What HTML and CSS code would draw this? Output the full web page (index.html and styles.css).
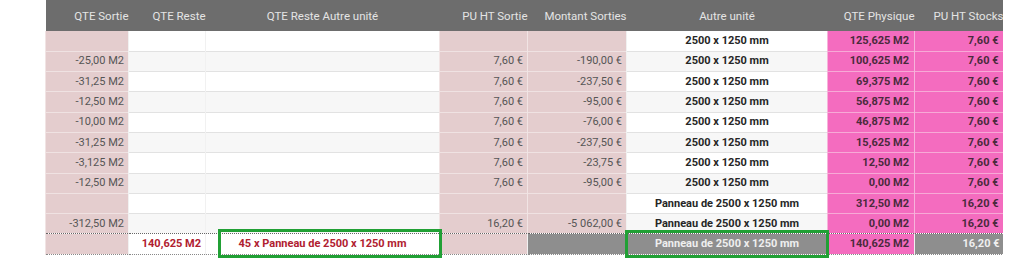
FILE: index.html
```html
<!DOCTYPE html>
<html lang="fr">
<head>
<meta charset="utf-8">
<title>Stocks</title>
<link rel="stylesheet" href="styles.css">
</head>
<body>
<div class="wrap">
  <table class="grid">
    <colgroup>
      <col class="c1"><col class="c2"><col class="c3"><col class="c4"><col class="c5"><col class="c6"><col class="c7"><col class="c8">
    </colgroup>
    <thead>
      <tr>
        <th class="r">QTE Sortie</th>
        <th class="r">QTE Reste</th>
        <th class="c">QTE Reste Autre unité</th>
        <th class="r">PU HT Sortie</th>
        <th class="r">Montant Sorties</th>
        <th class="c">Autre unité</th>
        <th class="r">QTE Physique</th>
        <th class="r last">PU HT Stocks</th>
      </tr>
    </thead>
    <tbody>
      <tr><td class="rose"></td><td></td><td></td><td class="rose"></td><td class="rose"></td><td class="unit">2500 x 1250 mm</td><td class="hot">125,625 M2</td><td class="hot">7,60 €</td></tr>
      <tr class="alt"><td class="rose">-25,00 M2</td><td></td><td></td><td class="rose">7,60 €</td><td class="rose">-190,00 €</td><td class="unit">2500 x 1250 mm</td><td class="hot">100,625 M2</td><td class="hot">7,60 €</td></tr>
      <tr><td class="rose">-31,25 M2</td><td></td><td></td><td class="rose">7,60 €</td><td class="rose">-237,50 €</td><td class="unit">2500 x 1250 mm</td><td class="hot">69,375 M2</td><td class="hot">7,60 €</td></tr>
      <tr class="alt"><td class="rose">-12,50 M2</td><td></td><td></td><td class="rose">7,60 €</td><td class="rose">-95,00 €</td><td class="unit">2500 x 1250 mm</td><td class="hot">56,875 M2</td><td class="hot">7,60 €</td></tr>
      <tr><td class="rose">-10,00 M2</td><td></td><td></td><td class="rose">7,60 €</td><td class="rose">-76,00 €</td><td class="unit">2500 x 1250 mm</td><td class="hot">46,875 M2</td><td class="hot">7,60 €</td></tr>
      <tr class="alt"><td class="rose">-31,25 M2</td><td></td><td></td><td class="rose">7,60 €</td><td class="rose">-237,50 €</td><td class="unit">2500 x 1250 mm</td><td class="hot">15,625 M2</td><td class="hot">7,60 €</td></tr>
      <tr><td class="rose">-3,125 M2</td><td></td><td></td><td class="rose">7,60 €</td><td class="rose">-23,75 €</td><td class="unit">2500 x 1250 mm</td><td class="hot">12,50 M2</td><td class="hot">7,60 €</td></tr>
      <tr class="alt"><td class="rose">-12,50 M2</td><td></td><td></td><td class="rose">7,60 €</td><td class="rose">-95,00 €</td><td class="unit">2500 x 1250 mm</td><td class="hot">0,00 M2</td><td class="hot">7,60 €</td></tr>
      <tr><td class="rose"></td><td></td><td></td><td class="rose"></td><td class="rose"></td><td class="unit">Panneau de 2500 x 1250 mm</td><td class="hot">312,50 M2</td><td class="hot">16,20 €</td></tr>
      <tr class="alt"><td class="rose">-312,50 M2</td><td></td><td></td><td class="rose">16,20 €</td><td class="rose">-5 062,00 €</td><td class="unit">Panneau de 2500 x 1250 mm</td><td class="hot">0,00 M2</td><td class="hot">16,20 €</td></tr>
      <tr class="total">
        <td class="rose"></td>
        <td class="red">140,625 M2</td>
        <td class="red c">45 x Panneau de 2500 x 1250 mm</td>
        <td class="rose"></td>
        <td class="grey"></td>
        <td class="grey c">Panneau de 2500 x 1250 mm</td>
        <td class="hot">140,625 M2</td>
        <td class="grey">16,20 €</td>
      </tr>
    </tbody>
  </table>
  <div class="mark mark-a"></div>
  <div class="mark mark-b"></div>
</div>
</body>
</html>
```
FILE: styles.css
```css
html, body {
  margin: 0;
  padding: 0;
  background: #ffffff;
}

.wrap {
  position: relative;
  padding-left: 45px;
  width: 958px;
  height: 259px;
  overflow: hidden;
}

.grid {
  border-collapse: collapse;
  table-layout: fixed;
  width: 958px;
  font-family: Roboto, "Liberation Sans", sans-serif;
  font-size: 11px;
  color: #555555;
}

.c1 { width: 83px; }
.c2 { width: 77px; }
.c3 { width: 234px; }
.c4 { width: 88px; }
.c5 { width: 99px; }
.c6 { width: 201px; }
.c7 { width: 87px; }
.c8 { width: 89px; }

.grid th {
  height: 31px;
  padding: 0;
  background: #6d6d6d;
  color: #e4e4e4;
  font-size: 11.5px;
  font-weight: 400;
  white-space: nowrap;
  overflow: hidden;
  vertical-align: middle;
}

.grid th.r { text-align: right; }
.grid th.c { text-align: center; }
.grid th.last { text-align: left; padding-left: 19px; }

.grid td {
  height: 20.3px;
  padding: 0 4px;
  box-sizing: border-box;
  border-top: 1px solid #e2e2e2;
  border-left: 1px solid #f1f1f1;
  text-align: right;
  white-space: nowrap;
  overflow: hidden;
  background: #ffffff;
  vertical-align: middle;
  line-height: 14px;
}

.grid tbody tr:first-child td { border-top: 0; }

.grid tr.alt td { background: #f7f7f7; }

.grid td.rose,
.grid tr.alt td.rose {
  background: #e4cdce;
  border-left-color: #f1e4e4;
  border-top-color: #efe2e2;
}

.grid td.hot,
.grid tr.alt td.hot {
  background: #f46cbf;
  color: #4a2a3c;
  font-weight: 700;
  padding-right: 5px;
  border-left-color: #f7b3db;
  border-top-color: #f7a9d6;
}

.grid td.unit {
  text-align: center;
  font-weight: 700;
  color: #262626;
}

.grid tr.total td {
  border-top: 1px dotted #666666;
  border-bottom: 1px dotted #888888;
  font-weight: 700;
}

.grid td.red {
  color: #b0202f;
  font-weight: 700;
}

.grid td.c { text-align: center; }

.grid td.grey {
  background: #8e8e8e;
  color: #efefef;
}

.mark {
  position: absolute;
  border: 3px solid #21a035;
  box-sizing: border-box;
}

.mark-a {
  left: 218px;
  top: 229px;
  width: 224px;
  height: 29px;
}

.mark-b {
  left: 625px;
  top: 230px;
  width: 204px;
  height: 28px;
}
```
